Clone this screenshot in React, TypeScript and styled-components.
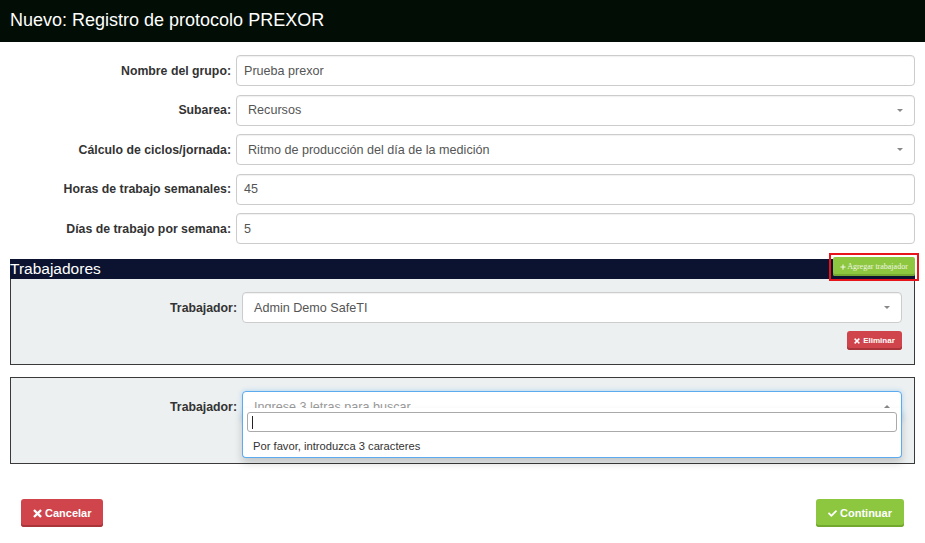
import styled, { createGlobalStyle } from "styled-components";
import { FaCheck, FaPlus } from "react-icons/fa";

const GlobalStyle = createGlobalStyle`
  body {
    margin: 0;
    background: #ffffff;
    font-family: "Liberation Sans", Arial, sans-serif;
  }
`;

const Header = styled.header`
  height: 42px;
  display: flex;
  align-items: center;
  padding: 0 10px 2px;
  box-sizing: border-box;
  background: #020e05;
  color: #ffffff;
  font-size: 18px;
`;

const FormGrid = styled.div`
  display: grid;
  grid-template-columns: 231px 1fr;
  column-gap: 5px;
  row-gap: 8.5px;
  padding: 13px 10px 0 0;
`;

const Label = styled.label`
  align-self: center;
  text-align: right;
  font-weight: bold;
  font-size: 12.3px;
  color: #333333;
`;

const Field = styled.div<{ $select?: boolean; $focused?: boolean }>`
  position: relative;
  height: 31px;
  box-sizing: border-box;
  display: flex;
  align-items: center;
  padding: 0 ${(p) => (p.$select ? "11px" : "7px")};
  border: 1px solid ${(p) => (p.$focused ? "#5cabef" : "#cccccc")};
  border-radius: 4px;
  background: #ffffff;
  color: #555555;
  font-size: 12.6px;
  box-shadow: ${(p) =>
    p.$focused ? "0 0 5px rgba(92, 171, 239, 0.45)" : "inset 0 1px 1px rgba(0, 0, 0, 0.06)"};
`;

const Placeholder = styled.span`
  color: #999999;
`;

const Caret = styled.span<{ $up?: boolean }>`
  margin-left: auto;
  width: 0;
  height: 0;
  border-left: 3px solid transparent;
  border-right: 3px solid transparent;
  ${(p) => (p.$up ? "border-bottom: 3px solid #888888;" : "border-top: 3px solid #888888;")}
`;

const Section = styled.section`
  margin: 15px 10px 0;
`;

const WorkersBar = styled.div`
  height: 20px;
  display: flex;
  justify-content: space-between;
  align-items: flex-start;
  background: #0b1330;
  color: #ffffff;
  font-size: 15.5px;
  line-height: 19px;
`;

/* red annotation frame drawn round the add button in the screenshot */
const Highlight = styled.span`
  margin: -6px -4px 0 0;
  padding: 2px 2px 3px;
  border: 2px solid #e8141b;
  display: flex;
`;

const AddButton = styled.button`
  width: 82px;
  height: 19px;
  padding: 0;
  display: flex;
  align-items: center;
  justify-content: center;
  gap: 1px;
  border: none;
  border-radius: 2px;
  background: #8dc63f;
  box-shadow: inset 0 -2px 0 #76aa30;
  color: #f1f6e3;
  font-family: "Liberation Serif", "Times New Roman", serif;
  font-size: 8px;

  svg {
    width: 6px;
    height: 6px;
  }
`;

const Panel = styled.div<{ $joined?: boolean }>`
  display: grid;
  grid-template-columns: 226px 1fr;
  column-gap: 5px;
  row-gap: 8px;
  padding: 13px 12px 14px 0;
  margin-top: ${(p) => (p.$joined ? "0" : "12px")};
  border: 1px solid #3a3a3a;
  ${(p) => (p.$joined ? "border-top: none;" : "")}
  background: #ecf0f1;
`;

const DeleteButton = styled.button`
  grid-column: 2;
  justify-self: end;
  width: 55px;
  height: 19px;
  padding: 0;
  display: flex;
  align-items: center;
  justify-content: center;
  gap: 3px;
  border: none;
  border-radius: 3px;
  background: #d0454c;
  box-shadow: inset 0 -2px 0 #a9353b;
  color: #ffffff;
  font-family: "Liberation Sans", Arial, sans-serif;
  font-weight: bold;
  font-size: 8px;

  svg {
    width: 6px;
    height: 6px;
  }
`;

const Dropdown = styled.div`
  position: absolute;
  top: 16px;
  left: -1px;
  right: -1px;
  z-index: 2;
  box-sizing: border-box;
  height: 50px;
  padding: 4px 4px 0;
  background: #ffffff;
  border: 1px solid #5cabef;
  border-top: none;
  border-radius: 0 0 4px 4px;
  box-shadow: 0 5px 8px rgba(0, 0, 0, 0.18);
`;

const SearchBox = styled.div`
  height: 20px;
  box-sizing: border-box;
  display: flex;
  align-items: center;
  padding-left: 4px;
  border: 1px solid #aaaaaa;
  border-radius: 3px;
`;

const TextCursor = styled.span`
  width: 1px;
  height: 13px;
  background: #222222;
`;

const Message = styled.div`
  height: 24px;
  display: flex;
  align-items: center;
  padding: 2px 0 0 6px;
  color: #333333;
  font-size: 11.2px;
`;

const Footer = styled.footer`
  display: flex;
  justify-content: space-between;
  padding: 35px 21px 0;
`;

const ActionButton = styled.button<{ $tone: "danger" | "success" }>`
  height: 28px;
  padding: 0 12px;
  display: flex;
  align-items: center;
  gap: 3px;
  border: none;
  border-radius: 3px;
  background: ${(p) => (p.$tone === "danger" ? "#d0454c" : "#8dc63f")};
  box-shadow: inset 0 -2px 0 ${(p) => (p.$tone === "danger" ? "#a9353b" : "#73a82f")};
  color: #ffffff;
  font-family: "Liberation Sans", Arial, sans-serif;
  font-weight: bold;
  font-size: 11px;

  svg {
    width: 9px;
    height: 9px;
  }
`;

function TimesIcon() {
  return (
    <svg viewBox="0 0 10 10" fill="none" stroke="currentColor" strokeWidth="2.6" strokeLinecap="square">
      <path d="M2 2 L8 8 M8 2 L2 8" />
    </svg>
  );
}

const fields: { label: string; value: string; select?: boolean }[] = [
  { label: "Nombre del grupo:", value: "Prueba prexor" },
  { label: "Subarea:", value: "Recursos", select: true },
  { label: "Cálculo de ciclos/jornada:", value: "Ritmo de producción del día de la medición", select: true },
  { label: "Horas de trabajo semanales:", value: "45" },
  { label: "Días de trabajo por semana:", value: "5" },
];

export default function App() {
  return (
    <>
      <GlobalStyle />
      <Header>Nuevo: Registro de protocolo PREXOR</Header>

      <FormGrid>
        {fields.map((f) => (
          <>
            <Label key={f.label + "-l"}>{f.label}</Label>
            <Field key={f.label + "-f"} $select={f.select}>
              {f.value}
              {f.select && <Caret />}
            </Field>
          </>
        ))}
      </FormGrid>

      <Section>
        <WorkersBar>
          <span>Trabajadores</span>
          <Highlight>
            <AddButton type="button">
              <FaPlus />
              Agregar trabajador
            </AddButton>
          </Highlight>
        </WorkersBar>

        <Panel $joined>
          <Label>Trabajador:</Label>
          <Field $select>
            Admin Demo SafeTI
            <Caret />
          </Field>
          <DeleteButton type="button">
            <TimesIcon />
            Eliminar
          </DeleteButton>
        </Panel>

        <Panel>
          <Label>Trabajador:</Label>
          <Field $select $focused>
            <Placeholder>Ingrese 3 letras para buscar</Placeholder>
            <Caret $up />
            <Dropdown>
              <SearchBox>
                <TextCursor />
              </SearchBox>
              <Message>Por favor, introduzca 3 caracteres</Message>
            </Dropdown>
          </Field>
          <DeleteButton type="button">
            <TimesIcon />
            Eliminar
          </DeleteButton>
        </Panel>
      </Section>

      <Footer>
        <ActionButton type="button" $tone="danger">
          <TimesIcon />
          Cancelar
        </ActionButton>
        <ActionButton type="button" $tone="success">
          <FaCheck />
          Continuar
        </ActionButton>
      </Footer>
    </>
  );
}
